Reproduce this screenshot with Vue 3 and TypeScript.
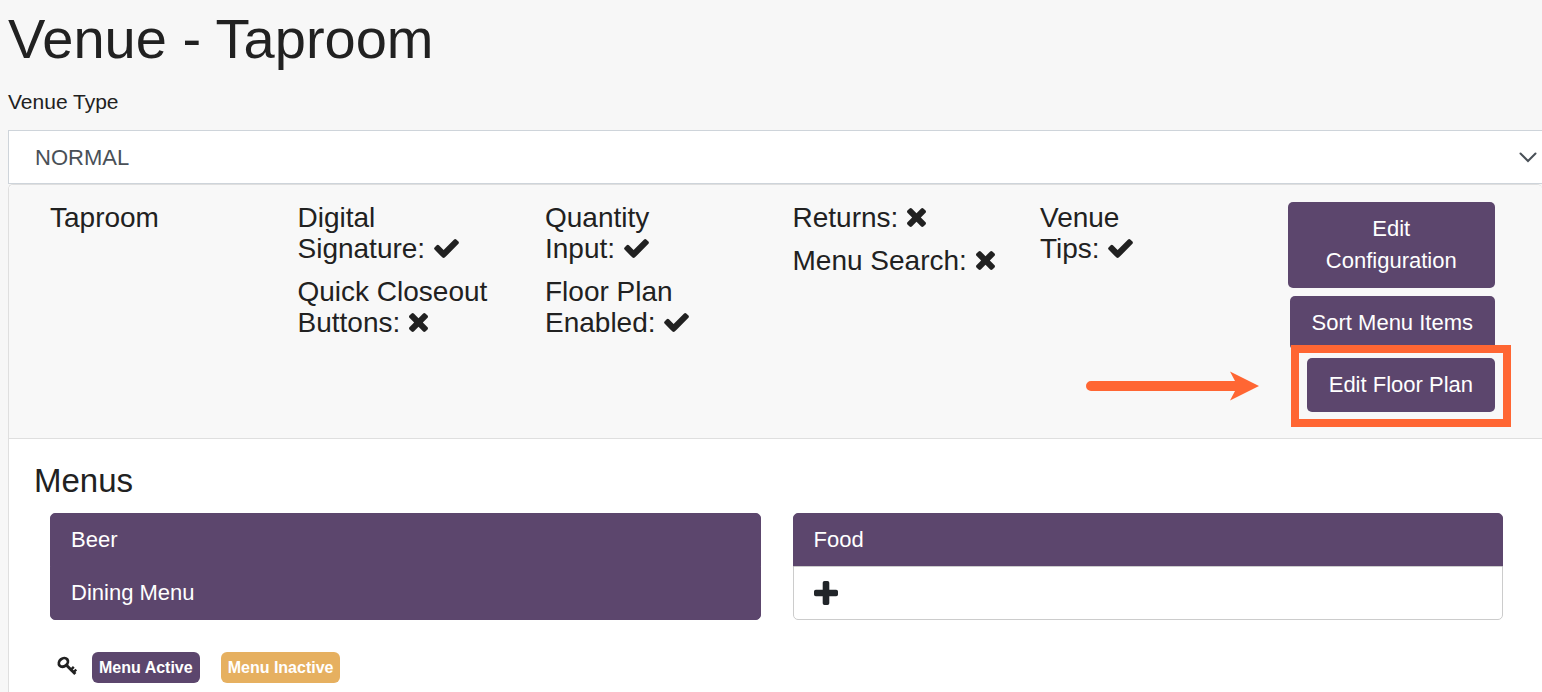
<script setup lang="ts">
import { ref } from 'vue'

interface Setting { lead: string; last: string; on: boolean }

const venueType = ref('NORMAL')
const settings: Setting[][] = [
  [
    { lead: 'Digital', last: 'Signature:', on: true },
    { lead: 'Quick Closeout', last: 'Buttons:', on: false },
  ],
  [
    { lead: 'Quantity', last: 'Input:', on: true },
    { lead: 'Floor Plan', last: 'Enabled:', on: true },
  ],
  [
    { lead: '', last: 'Returns:', on: false },
    { lead: 'Menu', last: 'Search:', on: false },
  ],
  [{ lead: 'Venue', last: 'Tips:', on: true }],
]
</script>

<template>
  <main class="page">
    <h1>Venue - Taproom</h1>
    <label class="type-label" for="venue-type">Venue Type</label>
    <div class="select-wrap">
      <select id="venue-type" v-model="venueType">
        <option value="NORMAL">NORMAL</option>
      </select>
      <svg class="chevron" viewBox="0 0 18 11" aria-hidden="true">
        <path d="M1.5 1.5 9 9l7.5-7.5" fill="none" stroke="currentColor" stroke-width="2" stroke-linecap="round" />
      </svg>
    </div>

    <section class="card">
      <header class="card-head">
        <div class="col"><h2 class="setting">Taproom</h2></div>
        <div v-for="(group, i) in settings" :key="i" class="col">
          <p v-for="s in group" :key="s.last" class="setting" :class="{ narrow: s.on }">
            {{ s.lead }}
            <span class="keep">{{ s.last }}
              <svg v-if="s.on" class="mark check" viewBox="121 260 1550 1188" role="img" aria-label="Yes">
                <path d="M1671 566q0 40-28 68l-724 724-136 136q-28 28-68 28t-68-28l-136-136-362-362q-28-28-28-68t28-68l136-136q28-28 68-28t68 28l294 295 656-657q28-28 68-28t68 28l136 136q28 28 28 68z" transform="translate(0 -74)" fill="currentColor" />
              </svg>
              <svg v-else class="mark cross" viewBox="302 366 1188 1188" role="img" aria-label="No">
                <path d="M1490 1322q0 40-28 68l-136 136q-28 28-68 28t-68-28l-294-294-294 294q-28 28-68 28t-68-28l-136-136q-28-28-28-68t28-68l294-294-294-294q-28-28-28-68t28-68l136-136q28-28 68-28t68 28l294 294 294-294q28-28 68-28t68 28l136 136q28 28 28 68t-28 68l-294 294 294 294q28 28 28 68z" fill="currentColor" />
              </svg>
            </span>
          </p>
        </div>
        <div class="col actions">
          <button type="button">Edit Configuration</button>
          <button type="button">Sort Menu Items</button>
          <div class="target">
            <button type="button">Edit Floor Plan</button>
            <span class="highlight"></span>
            <svg class="arrow" viewBox="0 0 173 30" aria-hidden="true">
              <path d="M5 10H149L144 .5 173 15 144 29.500 149 20H5A5 5 0 0 1 5 10Z" fill="#ff6633" />
            </svg>
          </div>
        </div>
      </header>

      <div class="card-body">
        <h2 class="menus-title">Menus</h2>
        <div class="menus">
          <ul class="menu-list">
            <li class="active"><a href="#beer">Beer</a></li>
            <li class="active"><a href="#dining">Dining Menu</a></li>
          </ul>
          <ul class="menu-list">
            <li class="active"><a href="#food">Food</a></li>
            <li>
              <button type="button" class="add" aria-label="Add menu">
                <svg viewBox="0 0 24 24" aria-hidden="true">
                  <path d="M10.500 0h3a1.800 1.800 0 0 1 1.800 1.800v6.900h6.900a1.800 1.800 0 0 1 1.800 1.800v3a1.800 1.800 0 0 1-1.800 1.800h-6.900v6.900a1.800 1.800 0 0 1-1.800 1.800h-3a1.800 1.800 0 0 1-1.800-1.800v-6.900H1.800A1.800 1.800 0 0 1 0 13.500v-3a1.800 1.800 0 0 1 1.800-1.800h6.900V1.800A1.800 1.800 0 0 1 10.500 0Z" fill="currentColor" />
                </svg>
              </button>
            </li>
          </ul>
        </div>
        <div class="legend">
          <svg class="key" viewBox="0 0 20 24" aria-hidden="true">
            <g fill="none" stroke="currentColor">
              <ellipse cx="6.400" cy="6.400" rx="4.900" ry="3.900" transform="rotate(-40 6.400 6.400)" stroke-width="2.800" />
              <path d="M9 8.800 18.300 18" stroke-width="3" />
              <path d="M13.800 13.800l3-3M16.600 16.200l2.700-2.700" stroke-width="2.400" />
            </g>
          </svg>
          <span class="badge">Menu Active</span>
          <span class="badge inactive">Menu Inactive</span>
        </div>
      </div>
    </section>
  </main>
</template>

<style>
body {
  margin: 0;
  background: #f7f7f7;
}
</style>

<style scoped>
* {
  box-sizing: border-box;
}
.page {
  padding-left: 8px;
  overflow: hidden;
  font-family: "Liberation Sans", Arial, sans-serif;
  color: #212121;
}
h1 {
  margin: 0;
  padding-top: 5px;
  font-size: 56px;
  line-height: 68px;
  font-weight: 400;
}
.type-label {
  display: block;
  margin-top: 13px;
  margin-bottom: 12px;
  font-size: 21px;
  line-height: 32px;
}
.select-wrap {
  position: relative;
}
select {
  display: block;
  width: 100%;
  height: 54px;
  padding: 0 26px;
  appearance: none;
  background: #fff;
  border: 1px solid #ced4da;
  border-right: 0;
  border-radius: 0;
  font: 22px "Liberation Sans", Arial, sans-serif;
  color: #495057;
}
.chevron {
  position: absolute;
  right: 5px;
  top: 22px;
  width: 18px;
  height: 11px;
  color: #495057;
  pointer-events: none;
}
.card {
  background: #fff;
  border: 1px solid #dfdfdf;
  border-right: 0;
  border-radius: 5px;
}
.card-head {
  display: grid;
  grid-template-columns: repeat(6, 1fr);
  padding: 17px 23px 11px 25px;
  background: #f8f8f8;
  border-bottom: 1px solid #dfdfdf;
  border-radius: 5px 5px 0 0;
}
.col {
  min-width: 0;
  padding: 0 16px;
}
.setting {
  margin: 0 0 12px;
  font-size: 28px;
  line-height: 31px;
  font-weight: 400;
}
.narrow {
  max-width: 176px;
}
.keep {
  white-space: nowrap;
}
.mark {
  height: 19px;
  margin-left: 1px;
  vertical-align: baseline;
}
.check {
  width: 25px;
}
.cross {
  width: 19px;
}
.actions {
  display: flex;
  flex-direction: column;
  align-items: flex-end;
  gap: 8px;
  padding-right: 24px;
}
.actions button {
  padding: 11px 22px;
  background: #5c466d;
  border: 0;
  border-radius: 5px;
  font: 22px/32px "Liberation Sans", Arial, sans-serif;
  color: #fff;
}
.target {
  position: relative;
  display: flex;
  margin-bottom: 15px;
}
.highlight {
  position: absolute;
  inset: -13px -16px -15px;
  border: 8px solid #ff6633;
  pointer-events: none;
}
.arrow {
  position: absolute;
  right: 236px;
  top: 13px;
  width: 173px;
  height: 30px;
}
.card-body {
  padding: 22px 23px 20px 25px;
}
.menus-title {
  margin: 0 0 12px;
  font-size: 33px;
  line-height: 40px;
  font-weight: 400;
}
.menus {
  display: grid;
  grid-template-columns: 1fr 1fr;
  gap: 32px;
  padding: 0 16px;
}
.menu-list {
  margin: 0;
  padding: 0;
  list-style: none;
}
.menu-list li {
  padding: 10px 20px;
  border: 1px solid #ccc;
  font-size: 22px;
  line-height: 32px;
}
.menu-list li:first-child {
  border-radius: 5px 5px 0 0;
}
.menu-list li:last-child {
  margin-top: -1px;
  border-radius: 0 0 5px 5px;
}
.menu-list .active {
  background: #5c466d;
  border-color: #5c466d;
}
.menu-list a {
  color: #fff;
  text-decoration: none;
}
.add {
  display: flex;
  padding: 4px 0;
  background: none;
  border: 0;
  color: #212529;
}
.add svg {
  width: 24px;
  height: 24px;
}
.legend {
  display: flex;
  align-items: center;
  margin-top: 32px;
  padding-left: 23px;
}
.key {
  width: 20px;
  height: 24px;
  margin-right: 15px;
}
.badge {
  margin-right: 21px;
  padding: 0 7px;
  background: #5c466d;
  border-radius: 6px;
  font-size: 16px;
  line-height: 31px;
  font-weight: 700;
  color: #fff;
}
.inactive {
  background: #e6b060;
}
</style>
